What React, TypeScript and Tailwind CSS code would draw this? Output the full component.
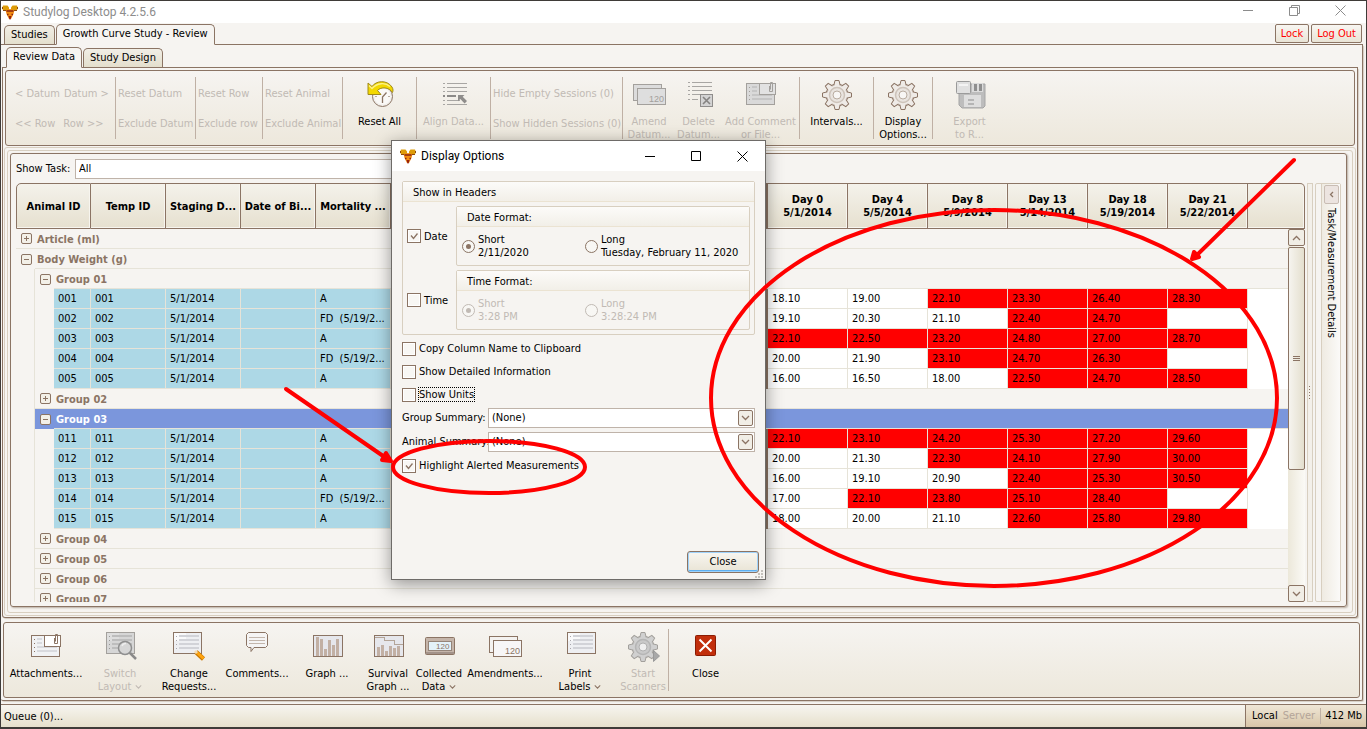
import type { ReactNode } from 'react';
import clsx from 'clsx';

const BROWN = '#8b7464';
const GREY = '#a3a09c';

/* ---------- Icons ---------- */

function Logo() {
    return (
        <svg width="16" height="16" viewBox="0 0 16 16">
            <path d="M1 1.500h4.500l1.500 2v3.500H3L0.500 5.500V3zM15 1.500h-4.500L9 3.500v3.500h4L15.500 5.500V3z" fill="#dd9c08" />
            <path d="M3.500 6 L8 5 L12.500 6 L11.500 10 L9 15 H7 L4.500 10 Z" fill="#f28c12" />
            <path d="M1 6.500h3M12 6.500h3M0.500 3v2M15.500 3v2" stroke="#8c4a10" />
            <path d="M4.500 7h7M5 10.500h1.500M9.500 10.500h1.500" stroke="#8c2410" strokeWidth="1.300" />
            <path d="M6.500 12 H9.500 L8.500 15.500 H7.500 Z" fill="#96200f" />
        </svg>
    );
}

function Icon({ children }: { children: ReactNode }) {
    return (
        <svg width="32" height="32" viewBox="0 0 32 32" fill="none" className="shrink-0 overflow-visible">
            {children}
        </svg>
    );
}

function Sheet({ x = 1, y = 1, off = false }: { x?: number; y?: number; off?: boolean }) {
    return (
        <g transform={`translate(${x} ${y})`} shapeRendering="crispEdges">
            <rect x="0.5" y="0.5" width="28" height="21" rx="1" fill={off ? '#d6d6d6' : '#eeeff2'} stroke={off ? GREY : BROWN} />
            <rect x="1" y="1" width="12" height="8" fill="#fff" opacity={off ? 0.2 : 0.7} />
            <path d="M3 4.5h1M3 8.5h1M3 12.5h1M3 16.5h1" stroke={off ? '#999' : '#a9a7ad'} />
            <path d="M6 4h20M6 8h20M6 12h20M6 16h20" stroke={off ? '#bdbdbd' : '#d2d3d8'} strokeWidth="2" />
        </g>
    );
}

function ResetIcon() {
    return (
        <Icon>
            <circle cx="18.5" cy="17.5" r="10" fill="#f1efeb" stroke={BROWN} />
            <circle cx="18.5" cy="17.5" r="8" fill="#faf9f7" />
            <path d="M18.5 24v-6l4-4.5" stroke={BROWN} strokeWidth="1.3" />
            <path d="M26 17.5h-2M11 17.5h2" stroke="#b9aca0" />
            <path d="M4 4 L8 7.500 C12 1.500 23 0.500 28 8 C29.500 10.500 29 12 28.500 13.500 C25 8 17 7.500 13.500 11.500 L17 15.500 H4 Z" fill="#f3d800" stroke="#a08a1c" />
            <path d="M5 6.500 L8 9.500 C13 4 21 3 26 7.500" stroke="#fdf28a" strokeWidth="1.3" />
        </Icon>
    );
}

function AlignIcon() {
    return (
        <Icon>
            <g shapeRendering="crispEdges" stroke="#a8a6a3">
                <path d="M5 4.500h2M9 4.500h20M5 8.500h2M9 8.500h20M5 12.500h2M9 12.500h20M5 21.500h2M9 21.500h13M5 25.500h2M9 25.500h20" />
                <path d="M5 17h2M9 17h9" stroke="#8c8a88" strokeWidth="2" />
            </g>
            <path d="M20 16h6.500l-1.800 1.800 4.300 4.200-2.400 2.400-4.300-4.400-2.300 2.300z" fill="#8f8d8b" />
        </Icon>
    );
}

function CardsIcon({ off = false }: { off?: boolean }) {
    const line = off ? GREY : BROWN;
    return (
        <Icon>
            <g shapeRendering="crispEdges">
                <rect x="0.5" y="5.500" width="28" height="16" rx="1" fill={off ? '#dcdcdc' : '#f4f2f0'} stroke={line} />
                <rect x="4.500" y="9.500" width="28" height="16" rx="1" fill={off ? '#dedede' : '#f7f6f7'} stroke={line} />
            </g>
            <text x="16" y="23" fontSize="9" fontFamily="Liberation Sans, sans-serif" fill={line}>120</text>
        </Icon>
    );
}

function DeleteIcon() {
    return (
        <Icon>
            <path d="M5 3.500h2M9 3.500h20M5 7.500h2M9 7.500h20M5 11.500h2M9 11.500h20M5 15.500h2M9 15.500h8M5 20.500h2M9 20.500h6" stroke="#a8a6a3" shapeRendering="crispEdges" />
            <rect x="17.500" y="15.500" width="12" height="12" fill="#d3d3d3" stroke="#8f8d8b" />
            <path d="M20 18l7 7M27 18l-7 7" stroke="#858381" strokeWidth="1.600" />
        </Icon>
    );
}

function ClipCardIcon({ off = false }: { off?: boolean }) {
    const line = off ? GREY : BROWN;
    return (
        <Icon>
            <g shapeRendering="crispEdges">
                <rect x="1.500" y="4.500" width="28" height="21" rx="1" fill={off ? '#d9d9d9' : '#f1f2f4'} stroke={line} />
                <path d="M4 8.500h1M4 12.500h1M4 16.500h1M4 20.500h1" stroke={line} />
                <path d="M7 8h5M7 12h5M7 16h20M7 20h20" stroke={off ? '#c6c6c6' : '#d9dade'} strokeWidth="2" />
                <rect x="14.500" y="4.500" width="16" height="11" fill={off ? '#e2e2e2' : '#fff'} stroke={line} />
            </g>
            <path d="M24.500 7v5.500h3V3.500h-2v7" stroke={line} />
        </Icon>
    );
}

function Gear({ off = false }: { off?: boolean }) {
    const line = off ? GREY : BROWN;
    return (
        <g>
            <circle cx="16" cy="16" r="11" fill={off ? '#d0d0d0' : '#efebe7'} stroke={line} />
            {[0, 45, 90, 135, 180, 225, 270, 315].map((deg) => (
                <path key={deg} d="M12.800 6.500 L14 1.500 H18 L19.200 6.500" fill={off ? '#d0d0d0' : '#efebe7'} stroke={line} transform={`rotate(${deg} 16 16)`} />
            ))}
            <circle cx="16" cy="16" r="7.500" stroke={off ? '#b5b5b5' : '#cdc3ba'} strokeWidth="1.500" fill={off ? '#c9c9c9' : '#e9e4df'} />
            <circle cx="16" cy="16" r="4" fill={off ? '#efefef' : '#f8f6f4'} stroke={off ? '#b0b0b0' : '#b9aca0'} />
        </g>
    );
}

function FloppyIcon() {
    return (
        <Icon>
            <path d="M7 5h24v22l-2 2H8l-3-3V7z" fill="#bdbdbd" stroke="#a5a5a5" />
            <rect x="18" y="4" width="11" height="9" fill="#dcdcdc" />
            <path d="M21.500 5v7M26.500 5v7" stroke="#8f8f8f" strokeWidth="3" />
            <rect x="10" y="16" width="17" height="12" fill="#dedede" />
            <path d="M14 21h6M14 25h6" stroke="#b5b5b5" strokeWidth="2" />
            <rect x="2.500" y="2.500" width="14" height="12" rx="1" fill="#e0e0e0" stroke="#9a9a9a" />
            <path d="M5 6h9" stroke="#f3f3f3" strokeWidth="2" />
        </Icon>
    );
}

function LayoutIcon() {
    return (
        <Icon>
            <Sheet x={2} y={1} off />
            <circle cx="21" cy="17" r="6.500" fill="#d6d6d6" stroke="#8f8f8f" strokeWidth="1.500" />
            <path d="M18 15a4 4 0 0 1 4-2.500" stroke="#eee" strokeWidth="1.500" />
            <path d="M26 22l6 6" stroke="#8a8a8a" strokeWidth="2.500" />
        </Icon>
    );
}

function PencilIcon() {
    return (
        <Icon>
            <Sheet x={0} y={1} />
            <path d="M23 21l7.500 7" stroke="#c77700" strokeWidth="4.500" />
            <path d="M24 21.500l6.500 6" stroke="#ffa40f" strokeWidth="3" />
            <path d="M22 20l2 2" stroke="#f3dcb4" strokeWidth="3" />
        </Icon>
    );
}

function BubbleIcon() {
    return (
        <Icon>
            <path d="M7.500 1.500h17l2 2v11l-2 2H13l-3 4v-4H7.500l-2-2v-11z" fill="#f5f4f4" stroke={BROWN} />
            <path d="M8 6.500h16M8 9.500h16M8 12.500h16" stroke="#c3b6ac" />
        </Icon>
    );
}

function GraphIcon({ survival = false }: { survival?: boolean }) {
    return (
        <Icon>
            <g shapeRendering="crispEdges">
                <rect x="2.500" y="4.500" width="29" height="21" rx="1" fill="#e6e7ec" stroke={BROWN} />
                {survival ? (
                    <g>
                        <path d="M3 6.500h9v3h10v4h9" stroke="#b3a498" />
                        <path d="M5 16h3v9h-3zM9 14h3v11h-3zM13 20h3v5h-3zM17 15h3v10h-3zM21 17h3v8h-3zM25 15h3v10h-3z" fill="#c2b0a4" />
                    </g>
                ) : (
                    <path d="M5 6h3v19h-3zM9 8h3v17h-3zM13 18h3v7h-3zM17 9h3v16h-3zM21 14h3v11h-3zM25 8h3v17h-3z" fill="#c2b0a4" />
                )}
            </g>
        </Icon>
    );
}

function DisplayIcon() {
    return (
        <Icon>
            <rect x="2.500" y="6.500" width="29" height="17" rx="1" fill="#c5b5aa" stroke={BROWN} />
            <path d="M3 22h28" stroke="#a3938a" strokeWidth="2" />
            <rect x="5.500" y="10.500" width="23" height="9" fill="#e3f2fa" stroke="#95857a" />
            <text x="13" y="18" fontSize="8" fontFamily="Liberation Sans, sans-serif" fill={BROWN}>120</text>
        </Icon>
    );
}

function ScannerIcon() {
    return (
        <Icon>
            <Gear off />
            <path d="M26.500 19.500l6 5.500-6 5.500z" fill="#a8a8a8" stroke="#999" />
        </Icon>
    );
}

function CloseIcon() {
    return (
        <Icon>
            <rect x="5.500" y="4.500" width="20" height="20" rx="1" fill="#c22f0c" stroke="#8a1c04" />
            <path d="M9.500 8.500l12 12M21.500 8.500l-12 12" stroke="#fff" strokeWidth="2" />
        </Icon>
    );
}

function Chevron({ className }: { className?: string }) {
    return (
        <svg width="9" height="6" viewBox="0 0 9 6" fill="none" className={clsx('shrink-0', className)}>
            <path d="M1 1l3.500 3.500L8 1" stroke="currentColor" strokeWidth="1.300" />
        </svg>
    );
}

/* ---------- Window chrome ---------- */

function WindowButtons({ restore = false }: { restore?: boolean }) {
    const button = 'w-[46px] h-full flex items-center justify-center';
    return (
        <div className={clsx('flex h-full', restore ? 'pb-[3px] text-[#8c8c8c]' : 'text-black')}>
            <button className={button} aria-label="Minimize">
                <svg width="11" height="11" fill="none" stroke="currentColor"><path d="M0 5.500h10" /></svg>
            </button>
            <button className={button} aria-label="Maximize">
                <svg width="11" height="11" fill="none" stroke="currentColor">
                    {restore ? <path d="M0.500 2.500h8v8h-8zM2.500 2.500v-2h8v8h-2" /> : <path d="M0.500 0.500h9v9h-9z" />}
                </svg>
            </button>
            <button className={button} aria-label="Close window">
                <svg width="11" height="11" fill="none" stroke="currentColor"><path d="M0.500 0.500l10 10M10.500 0.500l-10 10" /></svg>
            </button>
        </div>
    );
}

function Tab({ label, active = false }: { label: string; active?: boolean }) {
    return (
        <button
            className={clsx(
                'px-[6px] border border-[#8b7464] rounded-t-[5px] text-black',
                active ? 'h-[21px] -mb-px border-b-[#f6f4f1] bg-[#f6f4f1]' : 'h-[19px] border-b-0 bg-gradient-to-b from-[#f1eee6] to-[#e4dfcd]'
            )}
        >
            {label}
        </button>
    );
}

function ToolButton({ icon, label, width, off = false, menu = false }: { icon: ReactNode; label: string[]; width: string; off?: boolean; menu?: boolean }) {
    return (
        <button disabled={off} className={clsx('pt-2 flex flex-col items-center whitespace-nowrap leading-[13px]', width, off ? 'text-[#c1bab4]' : 'text-black')}>
            {icon}
            <span className="mt-1 flex flex-col items-center">
                {label.map((line, idx) => (
                    <span key={line} className="flex items-center gap-1">
                        {line}
                        {menu && idx === label.length - 1 && <Chevron className={clsx('w-[7px]', off ? 'text-[#c1bab4]' : 'text-[#8b7464]')} />}
                    </span>
                ))}
            </span>
        </button>
    );
}

function Separator() {
    return <div className="w-px shrink-0 my-[6px] bg-[#bfb0a4]" />;
}

function TextPair({ items, width }: { items: string[]; width: string }) {
    return (
        <div className={clsx('flex flex-col justify-center gap-[14px] pt-[2px] pl-[2px] text-[#c1bab4] whitespace-nowrap', width)}>
            {items.map((item) => (
                <button key={item} disabled className="h-4 leading-4 text-left">{item}</button>
            ))}
        </div>
    );
}

function Ribbon() {
    return (
        <div className="h-[76px] mx-[2px] mt-[2px] flex border border-[#8b7464] rounded-[3px] bg-gradient-to-b from-[#f6f4f1] to-[#ede8dc]">
            <div className="w-[109px] flex flex-col justify-center gap-[14px] pt-[2px] pl-[9px] text-[#c1bab4] whitespace-nowrap">
                <div className="flex h-4 leading-4 gap-1">
                    <button disabled>&lt; Datum</button>
                    <button disabled>Datum &gt;</button>
                </div>
                <div className="flex h-4 leading-4 gap-2">
                    <button disabled>&lt;&lt; Row</button>
                    <button disabled>Row &gt;&gt;</button>
                </div>
            </div>
            <Separator />
            <TextPair width="w-[79px]" items={['Reset Datum', 'Exclude Datum']} />
            <Separator />
            <TextPair width="w-[66px]" items={['Reset Row', 'Exclude row']} />
            <Separator />
            <TextPair width="w-[79px]" items={['Reset Animal', 'Exclude Animal']} />
            <Separator />
            <ToolButton width="w-[73px]" icon={<ResetIcon />} label={['Reset All']} />
            <Separator />
            <ToolButton width="w-[73px]" icon={<AlignIcon />} label={['Align Data...']} off />
            <Separator />
            <TextPair width="w-[131px]" items={['Hide Empty Sessions (0)', 'Show Hidden Sessions (0)']} />
            <Separator />
            <ToolButton width="w-[52px]" icon={<CardsIcon off />} label={['Amend', 'Datum...']} off />
            <ToolButton width="w-[47px]" icon={<DeleteIcon />} label={['Delete', 'Datum...']} off />
            <ToolButton width="w-[77px]" icon={<ClipCardIcon off />} label={['Add Comment', 'or File...']} off />
            <Separator />
            <ToolButton width="w-[73px]" icon={<Icon><Gear /></Icon>} label={['Intervals...']} />
            <Separator />
            <ToolButton width="w-[58px]" icon={<Icon><Gear /></Icon>} label={['Display', 'Options...']} />
            <Separator />
            <ToolButton width="w-[73px]" icon={<FloppyIcon />} label={['Export', 'to R...']} off />
        </div>
    );
}

function BottomBar() {
    return (
        <div className="h-[76px] ml-[2px] mr-[2px] mt-1 mb-[2px] flex border border-[#8b7464] rounded-[3px] bg-gradient-to-b from-[#f6f4f1] to-[#ede8dc]">
            <ToolButton width="w-[84px]" icon={<ClipCardIcon />} label={['Attachments...']} />
            <ToolButton width="w-[64px]" icon={<LayoutIcon />} label={['Switch', 'Layout']} off menu />
            <ToolButton width="w-[74px]" icon={<PencilIcon />} label={['Change', 'Requests...']} />
            <ToolButton width="w-[62px]" icon={<BubbleIcon />} label={['Comments...']} />
            <ToolButton width="w-[78px]" icon={<GraphIcon />} label={['Graph ...']} />
            <ToolButton width="w-[44px]" icon={<GraphIcon survival />} label={['Survival', 'Graph ...']} />
            <ToolButton width="w-[58px]" icon={<DisplayIcon />} label={['Collected', 'Data']} menu />
            <ToolButton width="w-[74px]" icon={<CardsIcon />} label={['Amendments...']} />
            <ToolButton width="w-[76px]" icon={<Icon><Sheet x={3} y={1} /></Icon>} label={['Print', 'Labels']} menu />
            <ToolButton width="w-[50px]" icon={<ScannerIcon />} label={['Start', 'Scanners']} off />
            <Separator />
            <ToolButton width="w-[73px]" icon={<CloseIcon />} label={['Close']} />
        </div>
    );
}

/* ---------- Data grid ---------- */

const COLUMNS = ['Temp ID', 'Staging D...', 'Date of Bi...', 'Mortality ...'];
const DAYS = [
    ['Day 0', '5/1/2014'],
    ['Day 4', '5/5/2014'],
    ['Day 8', '5/9/2014'],
    ['Day 13', '5/14/2014'],
    ['Day 18', '5/19/2014'],
    ['Day 21', '5/22/2014'],
];

type Animal = { id: string; status: string; weights: string[] };

const FOUND = 'FD  (5/19/2...';

const GROUP_01: Animal[] = [
    { id: '001', status: 'A', weights: ['18.10', '19.00', '22.10', '23.30', '26.40', '28.30'] },
    { id: '002', status: FOUND, weights: ['19.10', '20.30', '21.10', '22.40', '24.70', ''] },
    { id: '003', status: 'A', weights: ['22.10', '22.50', '23.20', '24.80', '27.00', '28.70'] },
    { id: '004', status: FOUND, weights: ['20.00', '21.90', '23.10', '24.70', '26.30', ''] },
    { id: '005', status: 'A', weights: ['16.00', '16.50', '18.00', '22.50', '24.70', '28.50'] },
];

const GROUP_03: Animal[] = [
    { id: '011', status: 'A', weights: ['22.10', '23.10', '24.20', '25.30', '27.20', '29.60'] },
    { id: '012', status: 'A', weights: ['20.00', '21.30', '22.30', '24.10', '27.90', '30.00'] },
    { id: '013', status: 'A', weights: ['16.00', '19.10', '20.90', '22.40', '25.30', '30.50'] },
    { id: '014', status: FOUND, weights: ['17.00', '22.10', '23.80', '25.10', '28.40', ''] },
    { id: '015', status: 'A', weights: ['18.00', '20.00', '21.10', '22.60', '25.80', '29.80'] },
];

const ALERT_LIMIT = 22;

const GROUPS: { name: string; animals?: Animal[]; selected?: boolean }[] = [
    { name: 'Group 01', animals: GROUP_01 },
    { name: 'Group 02' },
    { name: 'Group 03', animals: GROUP_03, selected: true },
    { name: 'Group 04' },
    { name: 'Group 05' },
    { name: 'Group 06' },
    { name: 'Group 07' },
];

function Toggle({ open = false }: { open?: boolean }) {
    return (
        <button aria-label={open ? 'Collapse' : 'Expand'} className="ml-[5px] w-[11px] h-[11px] flex items-center justify-center border border-[#8b7464] rounded-[2px] bg-[#f3f0e8]">
            <svg width="5" height="5" stroke="#8b7464" shapeRendering="crispEdges">
                <path d={open ? 'M0 2.500h5' : 'M0 2.500h5M2.500 0v5'} />
            </svg>
        </button>
    );
}

function AnimalRow({ animal }: { animal: Animal }) {
    const info = 'pl-1 bg-[#add8e6] border-r border-b border-[#e6e3d8]';
    return (
        <tr className="h-5">
            <td className="border-r border-[#e6e3d8]" />
            <td />
            <td className={info}>{animal.id}</td>
            <td className={info}>{animal.id}</td>
            <td className={info}>5/1/2014</td>
            <td className={info} />
            <td className={clsx(info, 'whitespace-pre')}>{animal.status}</td>
            <td className="border-r-[3px] border-r-[#8b7464] bg-white" />
            {animal.weights.map((weight, idx) => (
                <td key={idx} className={clsx('pl-1 border-r border-b border-[#e6e3d8]', Number(weight) > ALERT_LIMIT ? 'bg-[#ff0000]' : 'bg-white')}>
                    {weight}
                </td>
            ))}
            <td className="bg-white" />
        </tr>
    );
}

function DataGrid() {
    const th = 'p-0 align-middle border-t border-r border-b border-[#8b7464] bg-gradient-to-b from-[#f4f2eb] to-[#e6e0cf] shadow-[inset_-1px_-1px_0_#f7f5ef]';
    const line = 'border-b border-[#e6e3d8]';
    return (
        <div className="relative flex-1 min-w-0 overflow-hidden">
            <table className="w-full table-fixed border-separate border-spacing-0 text-left">
                <colgroup>
                    <col className="w-[19px]" />
                    <col className="w-[19px]" />
                    <col className="w-[37px]" />
                    {COLUMNS.map((name) => <col key={name} className="w-[75px]" />)}
                    <col className="w-[377px]" />
                    {DAYS.map(([day]) => <col key={day} className="w-[80px]" />)}
                    <col />
                </colgroup>
                <thead>
                    <tr className="h-[46px] text-center leading-[13px]">
                        <th colSpan={3} className={clsx(th, 'border-l rounded-tl-[5px]')}>Animal ID</th>
                        {COLUMNS.map((name) => <th key={name} className={th}>{name}</th>)}
                        <th className={clsx(th, 'border-r-[3px]')} />
                        {DAYS.map(([day, date]) => (
                            <th key={day} className={th}>{day}<br />{date}</th>
                        ))}
                        <th className={clsx(th, 'rounded-tr-[5px]')} />
                    </tr>
                </thead>
                <tbody className="leading-[15px]">
                    <tr className="h-5 font-bold text-[#8b7464]">
                        <td className={line}><Toggle /></td>
                        <td colSpan={14} className={clsx(line, 'pl-[2px] pt-px')}>Article (ml)</td>
                    </tr>
                    <tr className="h-5 font-bold text-[#8b7464]">
                        <td><Toggle open /></td>
                        <td colSpan={14} className={clsx(line, 'pl-[2px] pt-px')}>Body Weight (g)</td>
                    </tr>
                    {GROUPS.map((group) => [
                        <tr key={group.name} className={clsx('h-5 font-bold', group.selected ? 'text-white' : 'text-[#8b7464]')}>
                            <td className="border-r border-[#e6e3d8]" />
                            <td className={clsx(!group.animals && line, group.selected && 'bg-[#7b96dc]')}><Toggle open={!!group.animals} /></td>
                            <td colSpan={13} className={clsx(line, 'pl-[2px] pt-px', group.selected && 'bg-[#7b96dc]')}>{group.name}</td>
                        </tr>,
                        group.animals?.map((animal) => <AnimalRow key={animal.id} animal={animal} />),
                    ])}
                </tbody>
            </table>

            {/* Vertical scroll bar */}
            <div className="absolute right-0 top-[46px] bottom-0 w-[17px] flex flex-col bg-gradient-to-r from-[#ece8da] to-[#fbfaf6] text-[#8b7464]">
                <button aria-label="Scroll up" className="h-[17px] flex items-center justify-center border border-[#8b7464] rounded-[2px] bg-[#f1eee6]">
                    <Chevron className="rotate-180" />
                </button>
                <div className="h-[223px] mt-px flex items-center justify-center border border-[#8b7464] rounded-[2px] bg-gradient-to-r from-[#f6f4ef] to-[#e4dfce]">
                    <svg width="7" height="6" stroke="#8b7464" shapeRendering="crispEdges"><path d="M0 0.500h7M0 2.500h7M0 4.500h7" /></svg>
                </div>
                <button aria-label="Scroll down" className="mt-auto h-[17px] flex items-center justify-center border border-[#8b7464] rounded-[2px] bg-[#f1eee6]">
                    <Chevron />
                </button>
            </div>
        </div>
    );
}

/* ---------- Display options dialog ---------- */

function Check({ id, label, checked = false, focused = false }: { id: string; label: string; checked?: boolean; focused?: boolean }) {
    return (
        <div className="flex items-center gap-[2px] h-[15px]">
            <span className="grid w-[14px] h-[14px]">
                <input id={id} type="checkbox" defaultChecked={checked} className="peer [grid-area:1/1] appearance-none w-[14px] h-[14px] border border-[#8b7464] bg-[#f8f7f4] shadow-[inset_0_0_0_1px_#fff]" />
                <svg width="14" height="14" fill="none" className="[grid-area:1/1] hidden peer-checked:block pointer-events-none">
                    <path d="M4 6.500l2.500 3L10.500 4.500" stroke="#8b7464" strokeWidth="1.300" />
                </svg>
            </span>
            <label htmlFor={id} className={clsx('leading-[13px] border', focused ? 'border-dotted border-black' : 'border-transparent')}>{label}</label>
        </div>
    );
}

function Radio({ name, title, sample, checked = false, disabled = false }: { name: string; title: string; sample: string; checked?: boolean; disabled?: boolean }) {
    return (
        <label className={clsx('flex items-center gap-[3px] leading-[13px] whitespace-nowrap', disabled ? 'text-[#c1bab4]' : 'text-black')}>
            <input
                type="radio"
                name={name}
                defaultChecked={checked}
                disabled={disabled}
                className="appearance-none w-[13px] h-[13px] shrink-0 flex items-center justify-center rounded-full border border-[#8b7464] bg-[#f8f7f4] disabled:border-[#c1bab4] before:w-[5px] before:h-[5px] before:rounded-full checked:before:bg-[#8b7464] disabled:checked:before:bg-[#c1bab4]"
            />
            <span>{title}<br />{sample}</span>
        </label>
    );
}

function Fieldset({ title, children, className }: { title: string; children: ReactNode; className?: string }) {
    return (
        <div role="group" aria-label={title} className={clsx('border border-[#d8cfc0] rounded-[2px]', className)}>
            <div className="h-5 pl-[10px] leading-[21px] border-b border-[#ebe3d2] bg-gradient-to-b from-[#fcfbf9] to-[#f2efe8]">{title}</div>
            {children}
        </div>
    );
}

function Combo({ id, label }: { id: string; label: string }) {
    return (
        <div className="flex items-center">
            <label htmlFor={id} className="w-[86px] whitespace-nowrap">{label}</label>
            <div className="relative flex-1 h-5">
                <select id={id} className="appearance-none w-full h-5 px-[3px] border border-[#bfb3a9] bg-white">
                    <option>(None)</option>
                </select>
                <span className="absolute right-[2px] top-[2px] w-[15px] h-4 flex items-center justify-center border border-[#8b7464] rounded-[2px] bg-[#f1eee6] text-[#8b7464] pointer-events-none">
                    <Chevron />
                </span>
            </div>
        </div>
    );
}

function DisplayOptions() {
    return (
        <div role="dialog" aria-label="Display Options" className="absolute left-[390px] top-[139px] w-[375px] h-[440px] flex flex-col border border-[#6e6b68] bg-[#f6f4f1] shadow-[0_4px_16px_rgba(0,0,0,0.4)]">
            <div className="h-[30px] shrink-0 pl-2 flex items-center bg-white font-[Roboto,sans-serif] text-[12px]">
                <Logo />
                <span className="ml-[5px] flex-1">Display Options</span>
                <WindowButtons />
            </div>
            <div className="flex-1 flex flex-col pl-[10px] pr-[10px] pt-[10px]">
                <Fieldset title="Show in Headers">
                    <div className="flex flex-col gap-1 pl-1 pr-1 pt-1 pb-1">
                        <div className="flex items-center">
                            <div className="w-[49px]"><Check id="date" label="Date" checked /></div>
                            <Fieldset title="Date Format:" className="flex-1">
                                <div className="h-[38px] pl-[5px] flex items-center">
                                    <div className="w-[123px]"><Radio name="date-format" title="Short" sample="2/11/2020" checked /></div>
                                    <Radio name="date-format" title="Long" sample="Tuesday, February 11, 2020" />
                                </div>
                            </Fieldset>
                        </div>
                        <div className="flex items-center">
                            <div className="w-[49px]"><Check id="time" label="Time" /></div>
                            <Fieldset title="Time Format:" className="flex-1">
                                <div className="h-[38px] pl-[5px] flex items-center">
                                    <div className="w-[123px]"><Radio name="time-format" title="Short" sample="3:28 PM" checked disabled /></div>
                                    <Radio name="time-format" title="Long" sample="3:28:24 PM" disabled />
                                </div>
                            </Fieldset>
                        </div>
                    </div>
                </Fieldset>
                <div className="mt-[6px] flex flex-col gap-2">
                    <Check id="copy" label="Copy Column Name to Clipboard" />
                    <Check id="detail" label="Show Detailed Information" />
                    <Check id="units" label="Show Units" focused />
                </div>
                <div className="mt-[6px] mb-[6px] flex flex-col gap-1">
                    <Combo id="group-summary" label="Group Summary:" />
                    <Combo id="animal-summary" label="Animal Summary:" />
                </div>
                <Check id="highlight" label="Highlight Alerted Measurements" checked />
            </div>
            <div className="pr-[6px] pb-[6px] flex justify-end">
                <button className="w-[72px] h-[22px] border border-[#8b7464] rounded-[3px] bg-gradient-to-b from-[#f8f6f1] to-[#e9e4d5] shadow-[inset_0_0_0_1px_#9fd2fb,inset_0_-2px_0_#5fb0f0]">Close</button>
            </div>
            <svg width="8" height="8" className="absolute right-[2px] bottom-[1px]" fill="#c4c1bc" shapeRendering="crispEdges">
                <path d="M6 0h2v2h-2zM3 3h2v2h-2zM6 3h2v2h-2zM0 6h2v2h-2zM3 6h2v2h-2zM6 6h2v2h-2z" />
            </svg>
        </div>
    );
}

/* ---------- Red mark-up ---------- */

function Markup() {
    return (
        <svg className="absolute -left-px -top-px pointer-events-none" width="1367" height="729" fill="none" stroke="#ff0000" strokeWidth="4" strokeLinecap="round">
            <ellipse cx="994" cy="398" rx="283" ry="188" />
            <ellipse cx="489" cy="467" rx="96" ry="26" />
            <path d="M286 389L386 458" />
            <path d="M391 461L382 460L386 453Z" fill="#ff0000" strokeLinejoin="round" />
            <path d="M1294 160L1197 255" />
            <path d="M1192 259L1194 252L1199 257Z" fill="#ff0000" strokeLinejoin="round" />
        </svg>
    );
}

export default function App() {
    const sessionButton = 'h-[19px] px-[5px] leading-[18px] border border-[#8b7464] rounded-[2px] bg-gradient-to-b from-[#f8f6f2] to-[#e9e4d6] text-[#ff0000]';
    return (
        <div className="relative h-screen overflow-hidden flex flex-col border border-b-2 border-[#3f3b38] bg-[#f6f4f1] font-['DejaVu_Sans_Condensed','Noto_Sans',sans-serif] text-[11px] text-black">
            <div className="h-[22px] shrink-0 pl-px pr-[3px] flex items-center bg-white font-[Roboto,sans-serif] text-[12px] text-[#8c8c8c]">
                <Logo />
                <span className="ml-[5px] flex-1">Studylog Desktop 4.2.5.6</span>
                <WindowButtons restore />
            </div>

            <div className="h-[22px] shrink-0 mr-[3px] pl-[3px] flex items-end gap-px border-b border-[#8b7464]">
                <Tab label="Studies" />
                <Tab label="Growth Curve Study - Review" active />
                <div className="ml-auto mr-px mb-px flex gap-[2px]">
                    <button className={sessionButton}>Lock</button>
                    <button className={sessionButton}>Log Out</button>
                </div>
            </div>

            <div className="flex-1 min-h-0 mr-[3px] flex flex-col border-r border-b border-[#8b7464] rounded-b-[2px] shadow-[1px_1px_1px_#d5cdc2]">
                <div className="h-[23px] shrink-0 ml-px mr-1 pl-1 flex items-end gap-px border-b border-[#8b7464]">
                    <Tab label="Review Data" active />
                    <Tab label="Study Design" />
                </div>

                <div className="flex-1 min-h-0 ml-px mr-1 flex flex-col border-l border-r border-b border-[#8b7464] rounded-b-[3px] shadow-[1px_1px_1px_#d5cdc2]">
                    <Ribbon />
                    <div className="flex-1 min-h-0 mt-px mx-px mb-px p-[2px] flex border border-[#d8cfc0] rounded-[3px]">
                        <div className="flex-1 min-w-0 p-[2px] pr-[5px] pb-[5px] flex border border-[#d8cfc0] rounded-[3px]">
                            <div className="flex-1 min-w-0 pl-[5px] pr-[5px] pt-[5px] pb-1 flex flex-col border border-[#8b7464] rounded-[3px] shadow-[1px_1px_2px_#b9aea2]">
                                <div className="mb-1 flex items-center">
                                    <label htmlFor="task" className="w-[59px] whitespace-nowrap">Show Task:</label>
                                    <select id="task" defaultValue="All" className="appearance-none w-[400px] h-5 px-[3px] border border-[#bfb3a9] bg-white">
                                        <option>All</option>
                                    </select>
                                </div>
                                <div className="flex-1 min-h-0 flex gap-[2px]">
                                    <DataGrid />
                                    <div className="w-[6px] flex items-center justify-center border border-[#d8cfc0] bg-[#f3f0ea]">
                                        <svg width="2" height="14" fill="#8b7464" shapeRendering="crispEdges"><path d="M0 0h1v1h-1zM0 3h1v1h-1zM0 6h1v1h-1zM0 9h1v1h-1zM0 12h1v1h-1z" /></svg>
                                    </div>
                                    <div className="w-[26px] pl-[5px] flex border border-[#d8cfc0] rounded-[2px]">
                                        <div className="flex-1 pt-px flex flex-col items-center border-l border-[#d8cfc0] bg-gradient-to-r from-[#efebe2] to-[#fbfaf8]">
                                            <button aria-label="Expand details" className="w-[15px] h-[19px] flex items-center justify-center border border-[#c9bdb4] rounded-[2px] bg-[#ece4e0] text-[#8b7464]">
                                                <svg width="5" height="7" fill="none" stroke="currentColor" strokeWidth="1.300"><path d="M4 1L1.500 3.500L4 6" /></svg>
                                            </button>
                                            <span className="mt-1 leading-[16px] whitespace-nowrap [writing-mode:vertical-rl]">Task/Measurement Details</span>
                                        </div>
                                    </div>
                                </div>
                            </div>
                        </div>
                    </div>
                </div>

                <BottomBar />
            </div>

            <div className="mt-[3px] h-[23px] shrink-0 flex border-t border-[#8b7464] bg-gradient-to-b from-[#f7f5f0] to-[#e6e0cc]">
                <span className="flex-1 pl-[3px] leading-[23px]">Queue (0)...</span>
                <div className="pl-[6px] pr-1 flex items-center gap-[5px] border-l border-[#8b7464] bg-gradient-to-b from-[#efe6d6] to-[#d8c6a8]">
                    <span>Local</span>
                    <span className="text-[#b3a498]">Server</span>
                    <span className="pl-1 h-4 border-l border-[#bfb0a4]">412 Mb</span>
                </div>
            </div>

            <DisplayOptions />
            <Markup />
        </div>
    );
}
